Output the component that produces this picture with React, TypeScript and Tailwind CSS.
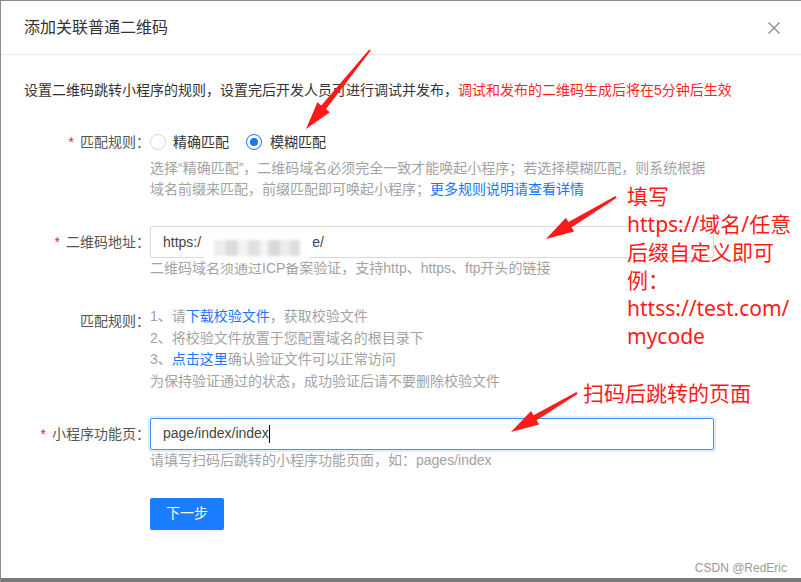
import React from 'react'

type Pt = [number, number]

function arrowPoints(from: Pt, to: Pt) {
  const [x1, y1] = from
  const [x2, y2] = to
  const dx = x2 - x1
  const dy = y2 - y1
  const len = Math.hypot(dx, dy)
  const ux = dx / len
  const uy = dy / len
  const px = -uy
  const py = ux
  const head = 28
  const wing = 8
  const t0 = 1
  const t1 = 3
  const bx = x2 - ux * head
  const by = y2 - uy * head
  const pts: Pt[] = [
    [x1 + px * t0, y1 + py * t0],
    [bx + px * t1, by + py * t1],
    [bx + px * wing, by + py * wing],
    [x2, y2],
    [bx - px * wing, by - py * wing],
    [bx - px * t1, by - py * t1],
    [x1 - px * t0, y1 - py * t0],
  ]
  return pts.map(([x, y]) => `${x.toFixed(1)},${y.toFixed(1)}`).join(' ')
}

const arrows: { from: Pt; to: Pt }[] = [
  { from: [369, 49], to: [305, 128] },
  { from: [615, 196], to: [545, 238] },
  { from: [576, 392], to: [510, 431] },
]

function Radio({ checked }: { checked?: boolean }) {
  return (
    <span
      className={
        checked
          ? 'flex h-[16px] w-[16px] items-center justify-center rounded-full border border-[#1677ff] bg-white'
          : 'flex h-[16px] w-[16px] items-center justify-center rounded-full border border-[#d9d9d9] bg-white'
      }
    >
      {checked && <span className="h-[8px] w-[8px] rounded-full bg-[#1677ff]" />}
    </span>
  )
}

function Label({ text, required, className }: { text: string; required?: boolean; className?: string }) {
  return (
    <div className={'w-[149px] shrink-0 text-right text-[14px] text-[#555] ' + (className ?? '')}>
      {required && <span className="mr-[6px] text-[#f5222d]">*</span>}
      {text}
    </div>
  )
}

export default function App() {
  return (
    <div className="relative flex h-[582px] w-[801px] flex-col overflow-hidden border-l border-t border-[#8c8c8c] bg-white font-['Liberation_Sans','Noto_Sans_CJK_SC',sans-serif]">
      {/* header */}
      <div className="flex h-[54px] shrink-0 items-center justify-between border-b border-[#e8e8e8] pl-[23px] pr-[21px]">
        <span className="text-[16px] text-[#333]">添加关联普通二维码</span>
        <svg width="12" height="12" viewBox="0 0 12 12">
          <path d="M0.5 0.5L11.5 11.5M11.5 0.5L0.5 11.5" stroke="#8c8c8c" strokeWidth="1.3" fill="none" />
        </svg>
      </div>

      {/* body */}
      <div className="flex-1">
        <p className="pl-[23px] pt-[24px] text-[14px] leading-[22px] text-[#333]">
          设置二维码跳转小程序的规则，设置完后开发人员可进行调试并发布，
          <span className="text-[#ff1f1f]">调试和发布的二维码生成后将在5分钟后生效</span>
        </p>

        {/* 匹配规则 */}
        <div className="mt-[30px] flex">
          <Label text="匹配规则：" required className="leading-[22px]" />
          <div>
            <div className="flex h-[22px] items-center text-[14px] text-[#333]">
              <Radio />
              <span className="ml-[7px]">精确匹配</span>
              <span className="ml-[17px]">
                <Radio checked />
              </span>
              <span className="ml-[8px]">模糊匹配</span>
            </div>
            <p className="mt-[5px] whitespace-nowrap text-[14px] leading-[21px] text-[#a3a3a3]">
              选择“精确匹配”，二维码域名必须完全一致才能唤起小程序；若选择模糊匹配，则系统根据
              <br />
              域名前缀来匹配，前缀匹配即可唤起小程序；
              <span className="text-[#1677ff]">更多规则说明请查看详情</span>
            </p>
          </div>
        </div>

        {/* 二维码地址 */}
        <div className="mt-[26px] flex">
          <Label text="二维码地址：" required className="leading-[32px]" />
          <div>
            <div className="relative flex h-[32px] w-[564px] items-center rounded-[2px] border border-[#d9d9d9] px-[12px] text-[14px] text-[#444]">
              <span>https:/</span>
              <span className="inline-block w-[111px]" />
              <span>e/</span>
              <div className="absolute left-[49px] top-[5px] flex h-[31px] w-[113px] items-center overflow-hidden rounded-full bg-white px-[14px]">
                <div className="flex h-[16px] blur-[1.5px]">
                  <span className="w-[12px] bg-[#ededed]" />
                  <span className="w-[12px] bg-[#dcdcdc]" />
                  <span className="w-[10px] bg-[#f3f3f3]" />
                  <span className="w-[12px] bg-[#e0e0e0]" />
                  <span className="w-[8px] bg-[#f5f5f5]" />
                  <span className="w-[12px] bg-[#d9d9d9]" />
                  <span className="w-[10px] bg-[#ececec]" />
                  <span className="w-[10px] bg-[#dedede]" />
                </div>
              </div>
            </div>
            <p className="text-[14px] leading-[21px] text-[#a3a3a3]">
              二维码域名须通过ICP备案验证，支持http、https、ftp开头的链接
            </p>
          </div>
        </div>

        {/* 匹配规则 steps */}
        <div className="mt-[27px] flex">
          <Label text="匹配规则：" className="pt-[5px] leading-[21.5px]" />
          <div className="text-[14px] leading-[21.7px] text-[#a3a3a3]">
            <p>
              1、请<span className="text-[#1677ff]">下载校验文件</span>，获取校验文件
            </p>
            <p>2、将校验文件放置于您配置域名的根目录下</p>
            <p>
              3、<span className="text-[#1677ff]">点击这里</span>确认验证文件可以正常访问
            </p>
            <p>为保持验证通过的状态，成功验证后请不要删除校验文件</p>
          </div>
        </div>

        {/* 小程序功能页 */}
        <div className="mt-[25px] flex">
          <Label text="小程序功能页：" required className="leading-[32px]" />
          <div>
            <div className="flex h-[32px] w-[564px] items-center rounded-[2px] border border-[#4096ff] px-[12px] text-[14px] text-[#444] shadow-[0_0_0_2px_rgba(24,144,255,0.15)]">
              <span>page/index/index</span>
              <span className="h-[18px] w-px bg-black" />
            </div>
            <p className="text-[14px] leading-[21px] text-[#a3a3a3]">
              请填写扫码后跳转的小程序功能页面，如：pages/index
            </p>
          </div>
        </div>

        <div className="mt-[27px] pl-[149px]">
          <button className="h-[32px] w-[74px] rounded-[2px] bg-[#1a7cff] text-[14px] text-white shadow-[0_2px_0_rgba(0,0,0,0.05)]">
            下一步
          </button>
        </div>
      </div>

      <div className="h-[4px] shrink-0 bg-[#7a7a7a]" />

      {/* watermark */}
      <span className="absolute right-[14px] top-[558px] text-[12px] leading-[18px] text-[#9a9a9a]">
        CSDN @RedEric
      </span>

      {/* annotations */}
      <div className="absolute left-[626px] top-[181px] font-['Noto_Sans','Noto_Sans_CJK_SC',sans-serif] text-[21px] leading-[28px] text-[#ff1a1a]">
        <p>填写</p>
        <p>https://域名/任意</p>
        <p>后缀自定义即可</p>
        <p>例：</p>
        <p>httss://test.com/</p>
        <p>mycode</p>
      </div>
      <div className="absolute left-[582px] top-[378px] font-['Noto_Sans','Noto_Sans_CJK_SC',sans-serif] text-[21px] leading-[28px] text-[#ff1a1a]">
        扫码后跳转的页面
      </div>
      <svg className="pointer-events-none absolute left-0 top-0" width="801" height="582">
        {arrows.map((a, i) => (
          <polygon key={i} points={arrowPoints(a.from, a.to)} fill="#ff1a1a" />
        ))}
      </svg>
    </div>
  )
}
